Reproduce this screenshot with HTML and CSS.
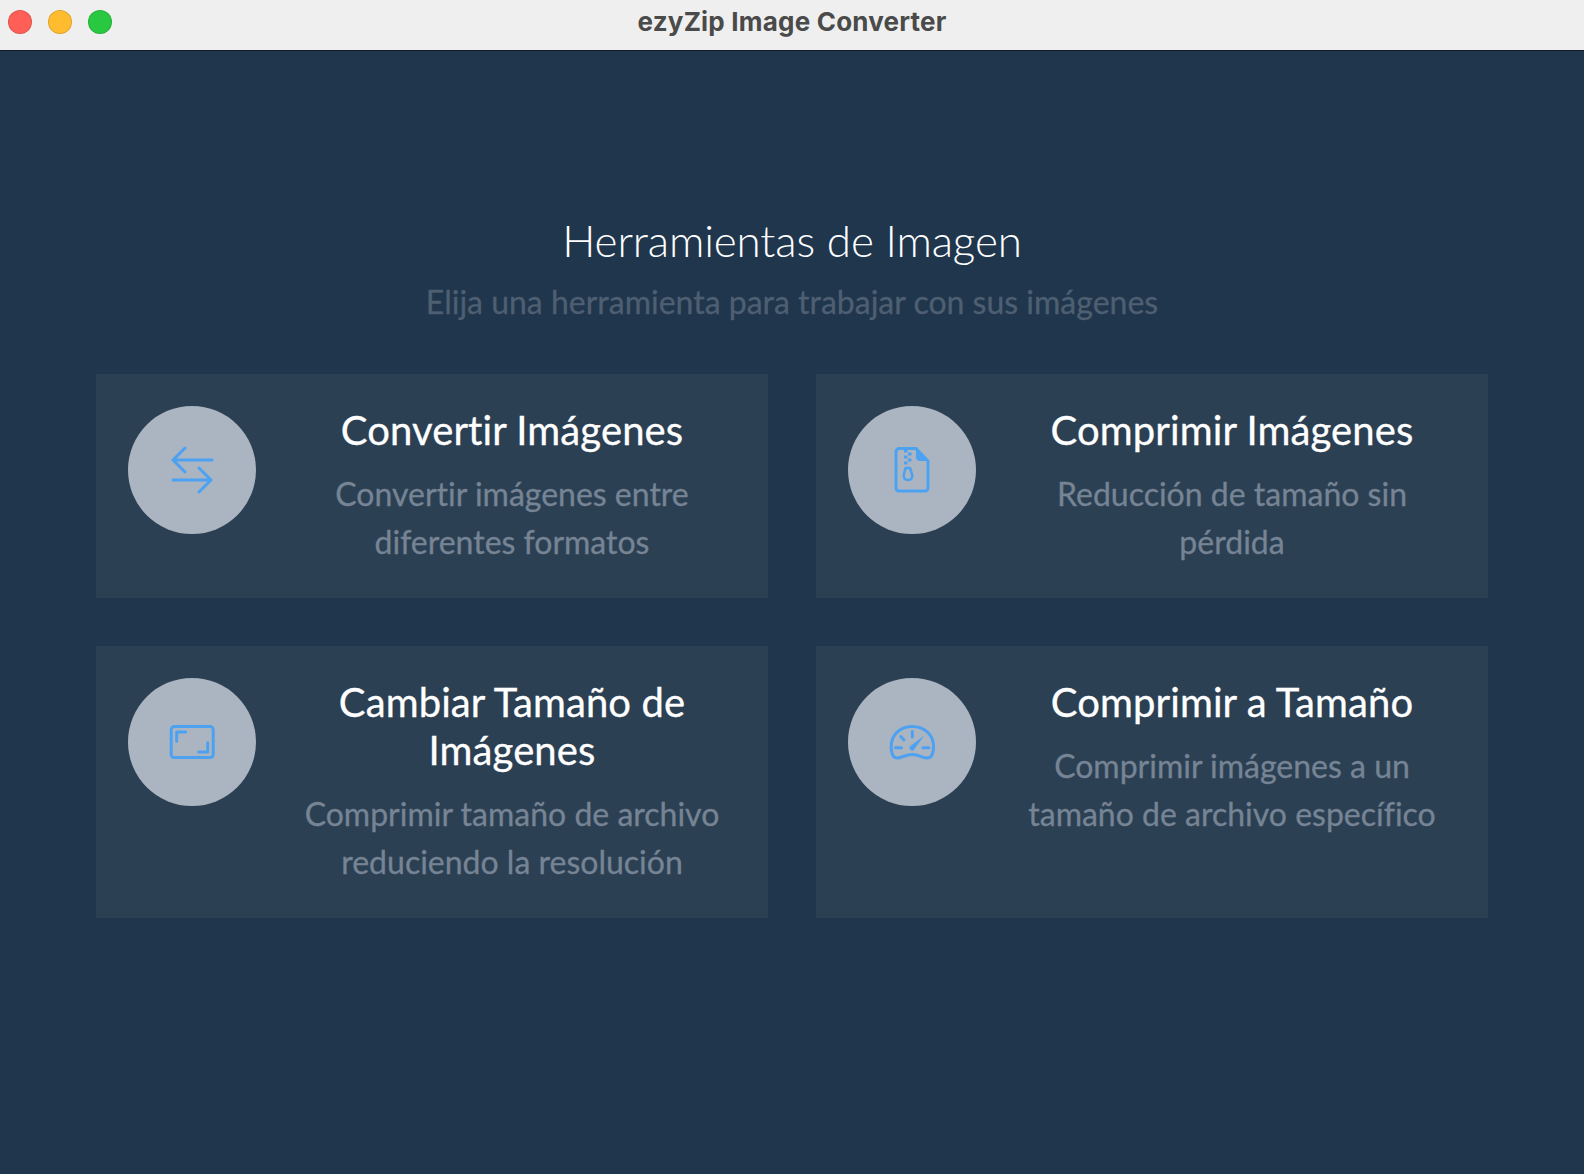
FILE: index.html
```html
<!DOCTYPE html>
<html lang="es">
<head>
    <meta charset="UTF-8">
    <title>ezyZip Image Converter</title>
    <link rel="stylesheet" href="styles.css">
</head>
<body>
    <header class="titlebar">
        <div class="traffic">
            <span class="light red"></span>
            <span class="light yellow"></span>
            <span class="light green"></span>
        </div>
        <div class="window-title">ezyZip Image Converter</div>
    </header>

    <main class="content">
        <h1>Herramientas de Imagen</h1>
        <p class="subtitle">Elija una herramienta para trabajar con sus imágenes</p>

        <div class="tools">
            <div class="tool-card">
                <div class="icon-circle">
                    <svg viewBox="0 0 48 48" class="icon">
                        <path d="M44 14H5M17 2 5 14l12 12M5 34h38M31 22l12 12-12 12"/>
                    </svg>
                </div>
                <div class="tool-text">
                    <h2>Convertir Imágenes</h2>
                    <p>Convertir imágenes entre diferentes formatos</p>
                </div>
            </div>

            <div class="tool-card">
                <div class="icon-circle">
                    <svg viewBox="0 0 48 48" class="icon">
                        <path d="M11 2.600h17L40 15v27a3 3 0 0 1-3 3H11a3 3 0 0 1-3-3V5.600a3 3 0 0 1 3-3z"/>
                        <path class="solid" d="M28 2.600 40 15h-8a4 4 0 0 1-4-4z"/>
                        <path class="teeth" d="M16 5h3.500M20 8h3.500M16 11h3.500M20 14h3.500M16 17h3.500"/>
                        <path class="thin" d="M17.500 22h4.500l2.300 7.500a4 4 0 0 1-3.800 4.500h-1a4 4 0 0 1-3.800-4.500z"/>
                    </svg>
                </div>
                <div class="tool-text">
                    <h2>Comprimir Imágenes</h2>
                    <p>Reducción de tamaño sin pérdida</p>
                </div>
            </div>

            <div class="tool-card">
                <div class="icon-circle">
                    <svg viewBox="0 0 48 48" class="icon">
                        <rect x="3.200" y="8.600" width="42" height="31" rx="3"/>
                        <path d="M8.700 23.300V14h9M39.700 24.700V34h-9"/>
                    </svg>
                </div>
                <div class="tool-text">
                    <h2>Cambiar Tamaño de Imágenes</h2>
                    <p>Comprimir tamaño de archivo reduciendo la resolución</p>
                </div>
            </div>

            <div class="tool-card">
                <div class="icon-circle">
                    <svg viewBox="0 0 48 48" class="icon">
                        <path d="M24.300 8.500C12 8.500 3.200 17 3.200 28.500c0 7 2 11.500 6.300 11.500 4 0 8.300-3.600 14.800-3.600S35 40 39 40c4.500 0 6.500-4.500 6.500-11.500C45.500 17 36.600 8.500 24.300 8.500z"/>
                        <path d="M24.300 13.500V19M12.700 18.500l3.300 3.500M7.500 29.700h6M34.900 29.700h6"/>
                        <path class="solid" d="M36.200 17.400 25.900 31.700a2.500 2.500 0 0 1-3.700-3.400z"/>
                    </svg>
                </div>
                <div class="tool-text">
                    <h2>Comprimir a Tamaño</h2>
                    <p>Comprimir imágenes a un tamaño de archivo específico</p>
                </div>
            </div>
        </div>
    </main>
</body>
</html>
```

FILE: styles.css
```css
* {
    box-sizing: border-box;
}

html, body {
    height: 100%;
}

body {
    margin: 0;
    display: flex;
    flex-direction: column;
    font-family: Lato, sans-serif;
    font-variant-ligatures: none;
    background: #20364d;
    color: #fff;
    overflow: hidden;
}

.titlebar {
    position: relative;
    height: 51px;
    flex: none;
    background: #efefef;
    border-bottom: 1px solid #0f1d2b;
    display: flex;
    align-items: center;
    justify-content: center;
}

.traffic {
    position: absolute;
    left: 8px;
    top: 10px;
    display: flex;
    gap: 16px;
}

.light {
    width: 24px;
    height: 24px;
    border-radius: 50%;
    border: 1px solid rgba(0, 0, 0, 0.12);
}

.red { background: #ff5f57; }
.yellow { background: #febc2e; }
.green { background: #28c840; }

.window-title {
    font-family: Inter, sans-serif;
    font-size: 26px;
    font-weight: 700;
    letter-spacing: 0.2px;
    color: #4a4a4a;
    margin-top: -8px;
}

.content {
    flex: 1;
    padding: 163px 96px 0;
    text-align: center;
}

h1 {
    margin: 0;
    font-size: 44px;
    font-weight: 300;
    line-height: 52px;
    letter-spacing: -0.15px;
}

.subtitle {
    margin: 16px 0 0;
    font-size: 32px;
    line-height: 40px;
    color: #4e5f71;
    -webkit-text-stroke: 0.3px #4e5f71;
}

.tools {
    margin-top: 52px;
    display: grid;
    grid-template-columns: 1fr 1fr;
    gap: 48px;
}

.tool-card {
    display: flex;
    align-items: flex-start;
    padding: 32px;
    background: #2c4054;
}

.icon-circle {
    width: 128px;
    height: 128px;
    flex: none;
    border-radius: 50%;
    background: #abb5c2;
    display: flex;
    align-items: center;
    justify-content: center;
}

.icon {
    width: 48px;
    height: 48px;
    fill: none;
    stroke: #4da1f1;
    stroke-width: 3;
    stroke-linecap: round;
    stroke-linejoin: round;
}

.icon .solid {
    fill: #4da1f1;
    stroke: none;
}

.icon .thin {
    stroke-width: 2.6;
}

.icon .teeth {
    stroke-width: 2.8;
    stroke-linecap: butt;
}

.tool-text {
    flex: 1;
    margin-left: 32px;
}

.tool-text h2 {
    margin: 0 0 16px;
    font-size: 40px;
    font-weight: 400;
    line-height: 48px;
    letter-spacing: 0.1px;
    -webkit-text-stroke: 0.3px #fff;
}

.tool-text p {
    margin: 0;
    font-size: 32px;
    line-height: 48px;
    color: #768494;
    -webkit-text-stroke: 0.3px #768494;
}
```
